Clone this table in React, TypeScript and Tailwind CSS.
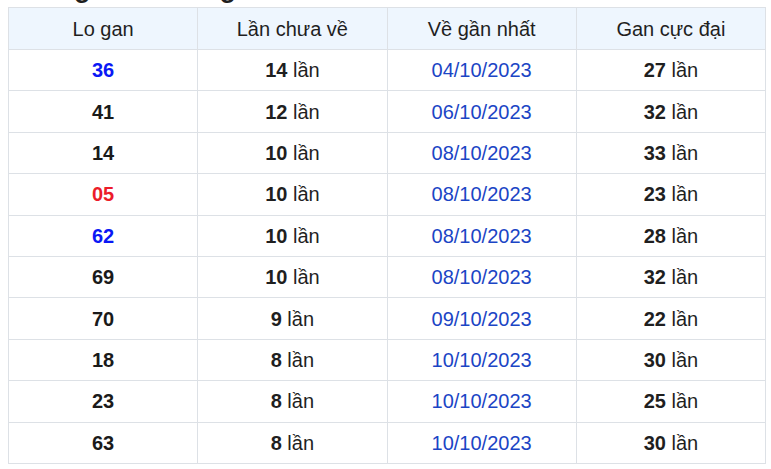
const rows = [
  { lo: "36", color: "text-[#0a18f5]", chua: 14, date: "04/10/2023", max: 27 },
  { lo: "41", color: "text-[#1a1a1a]", chua: 12, date: "06/10/2023", max: 32 },
  { lo: "14", color: "text-[#1a1a1a]", chua: 10, date: "08/10/2023", max: 33 },
  { lo: "05", color: "text-[#ec1c2a]", chua: 10, date: "08/10/2023", max: 23 },
  { lo: "62", color: "text-[#0a18f5]", chua: 10, date: "08/10/2023", max: 28 },
  { lo: "69", color: "text-[#1a1a1a]", chua: 10, date: "08/10/2023", max: 32 },
  { lo: "70", color: "text-[#1a1a1a]", chua: 9, date: "09/10/2023", max: 22 },
  { lo: "18", color: "text-[#1a1a1a]", chua: 8, date: "10/10/2023", max: 30 },
  { lo: "23", color: "text-[#1a1a1a]", chua: 8, date: "10/10/2023", max: 25 },
  { lo: "63", color: "text-[#1a1a1a]", chua: 8, date: "10/10/2023", max: 30 },
];

const headers = ["Lo gan", "Lần chưa về", "Về gần nhất", "Gan cực đại"];

export default function App() {
  return (
    <div className="bg-white w-[771px] h-[469px] overflow-hidden font-['Liberation_Sans',Arial,sans-serif] text-[#1f1f1f]">
      {/* heading above is scrolled off, only descenders peek out */}
      <div className="h-[7px] overflow-hidden px-2">
        <h2 className="-mt-[27px] text-[27px] leading-[31px] font-bold whitespace-nowrap">
          Thống kê các lô gan
        </h2>
      </div>
      <table className="ml-2 w-[758px] border-collapse table-fixed text-[20px]">
        <thead>
          <tr className="bg-[#eef6fe]">
            {headers.map((h) => (
              <th
                key={h}
                className="h-[42px] border border-[#dde1e6] font-normal text-center"
              >
                {h}
              </th>
            ))}
          </tr>
        </thead>
        <tbody>
          {rows.map((r) => (
            <tr key={r.lo}>
              <td className={`h-[41.4px] border border-[#dde1e6] text-center font-bold ${r.color}`}>
                {r.lo}
              </td>
              <td className="border border-[#dde1e6] text-center">
                <b>{r.chua}</b> lần
              </td>
              <td className="border border-[#dde1e6] text-center text-[#1b45c5]">
                {r.date}
              </td>
              <td className="border border-[#dde1e6] text-center">
                <b>{r.max}</b> lần
              </td>
            </tr>
          ))}
        </tbody>
      </table>
    </div>
  );
}
